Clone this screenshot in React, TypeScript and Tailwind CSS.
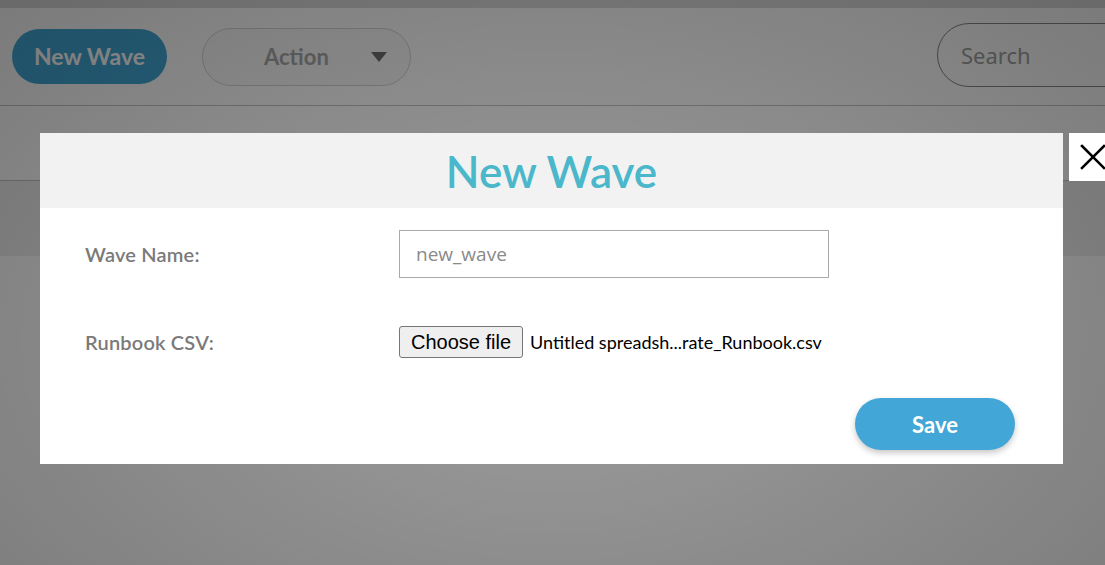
const font = { fontFamily: 'Lato, "Noto Sans", sans-serif' }

function Toolbar() {
  return (
    <div className="h-[98px] flex items-center border-b border-[#c4c4c4] bg-white">
      <button className="ml-[12px] w-[155px] h-[55px] rounded-full bg-[#42a8d6] text-white text-[23px] font-bold">
        New Wave
      </button>
      <button className="ml-[35px] w-[209px] h-[58px] rounded-full border border-[#d4d4d4] bg-[#fafafa] flex items-center text-[#a8a8a8] text-[22px] font-bold">
        <span className="ml-[61px]">Action</span>
        <span className="ml-[42px] w-0 h-0 border-l-[8px] border-r-[8px] border-t-[10px] border-l-transparent border-r-transparent border-t-[#707070]" />
      </button>
      <div
        className="ml-auto self-start mt-[15px] w-[200px] -mr-[32px] h-[64px] rounded-l-full border border-[#888] flex items-center pl-[23px] text-[22px] text-[#a0a0a0]"
        style={{ fontFamily: '"Noto Sans", sans-serif' }}
      >
        Search
      </div>
    </div>
  )
}

export default function App() {
  return (
    <div className="relative w-[1105px] h-[565px] overflow-hidden bg-white" style={font}>
      <div className="h-[8px] bg-[#dcdcdc]" />
      <Toolbar />
      <div className="h-[75px] border-b border-[#c4c4c4] bg-white" />
      <div className="h-[75px] bg-[#eeeeee]" />

      {/* dim overlay */}
      <div className="absolute inset-0 bg-[radial-gradient(ellipse_at_50%_60%,rgba(0,0,0,0.38),rgba(0,0,0,0.52))]" />

      {/* modal */}
      <div className="absolute left-[40px] top-[133px] w-[1023px] bg-white">
        <div className="h-[75px] bg-[#f2f2f2] flex items-center justify-center">
          <h1 className="text-[44px] font-semibold text-[#4bb7cb] leading-none">New Wave</h1>
        </div>
        <div className="pt-[22px] pb-[14px] pl-[45px] pr-[48px]">
          <div className="grid grid-cols-[314px_430px] items-center">
            <label className="text-[20px] font-semibold text-[#7a7a7a] tracking-[0.2px]">Wave Name:</label>
            <input
              className="h-[48px] border border-[#aaaaaa] px-[16px] text-[19px] text-[#555] placeholder:text-[#8a8a8a] outline-none"
              style={{ fontFamily: '"Open Sans", sans-serif' }}
              placeholder="new_wave"
            />
          </div>
          <div className="grid grid-cols-[314px_auto] items-center mt-[48px]">
            <label className="text-[20px] font-semibold text-[#7a7a7a] tracking-[0.2px]">Runbook CSV:</label>
            <div className="flex items-center">
              <button
                className="h-[32px] w-[124px] bg-[#efefef] border border-[#767676] rounded-[3px] text-[20px] text-black"
                style={{ fontFamily: 'Arial, "Liberation Sans", sans-serif' }}
              >
                Choose file
              </button>
              <span className="ml-[7px] text-[18px] text-black">Untitled spreadsh...rate_Runbook.csv</span>
            </div>
          </div>
          <div className="flex justify-end mt-[40px]">
            <button className="w-[160px] h-[52px] rounded-full bg-[#42a6d6] text-white text-[22px] font-bold shadow-[0_3px_6px_rgba(0,0,0,0.22)]">
              Save
            </button>
          </div>
        </div>
      </div>

      {/* close */}
      <button className="absolute left-[1069px] top-[133px] w-[48px] h-[48px] bg-white flex items-start pl-[11px] pt-[11px]">
        <svg width="26" height="26" viewBox="0 0 26 26" stroke="black" strokeWidth="2.6" strokeLinecap="square">
          <line x1="2" y1="2" x2="24" y2="24" />
          <line x1="24" y1="2" x2="2" y2="24" />
        </svg>
      </button>
    </div>
  )
}
